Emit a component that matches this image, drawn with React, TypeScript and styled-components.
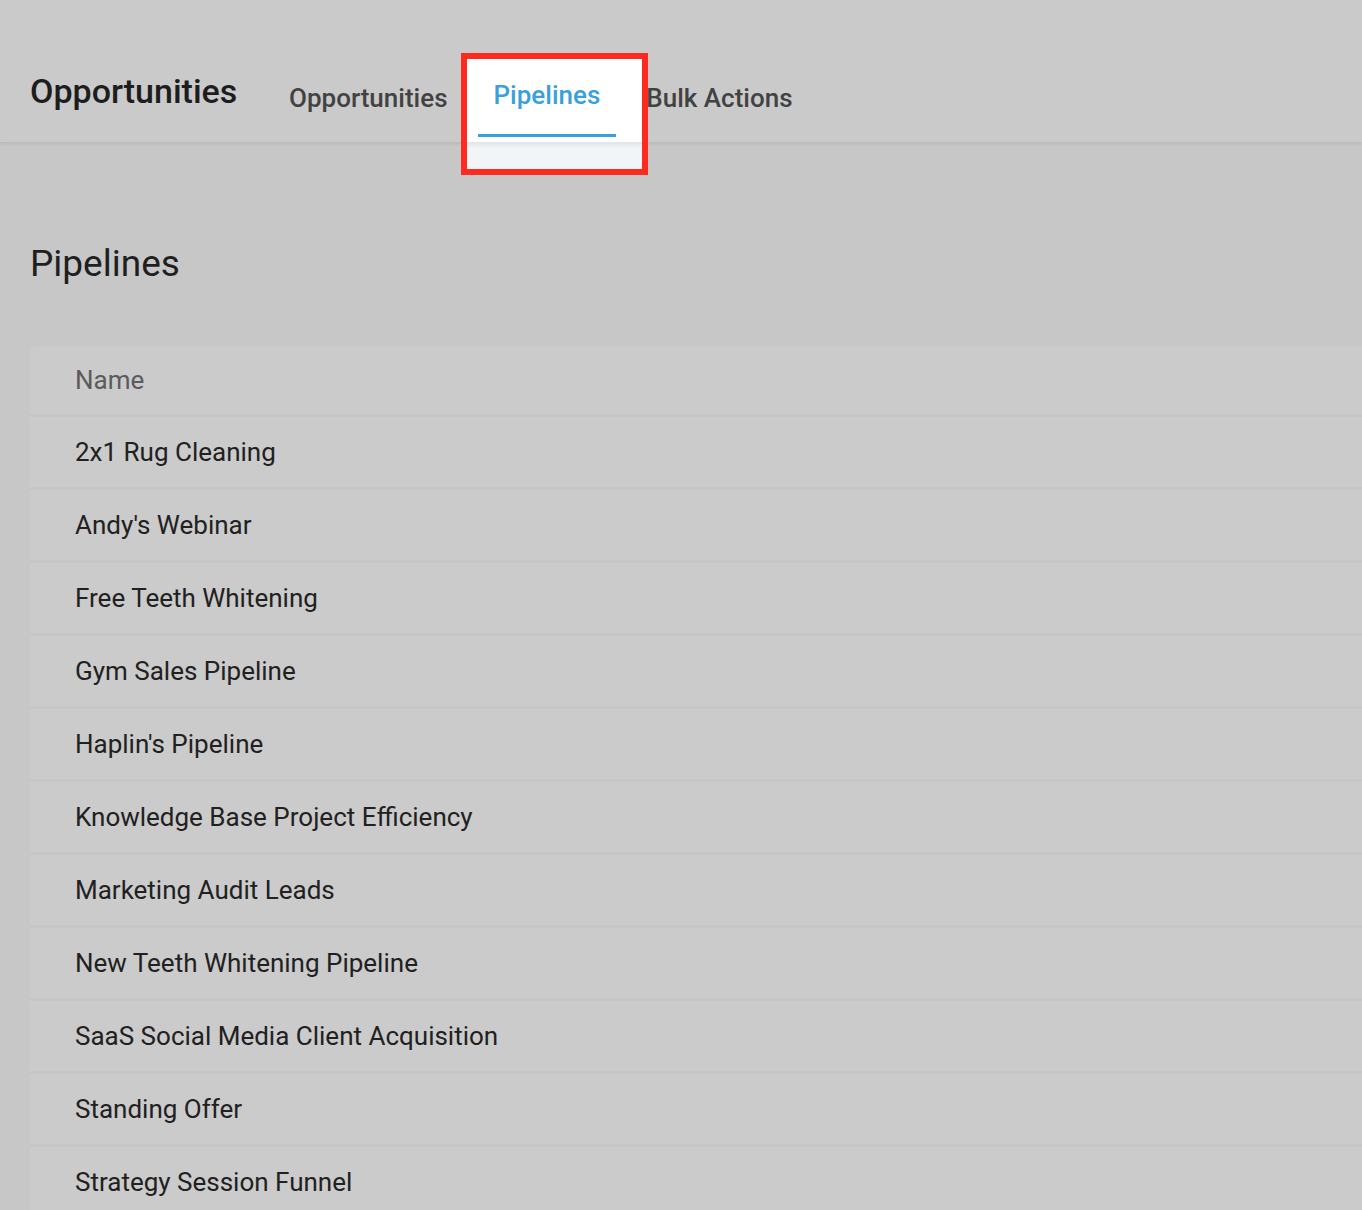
import styled, { createGlobalStyle } from "styled-components";

const pipelines = [
  "2x1 Rug Cleaning",
  "Andy's Webinar",
  "Free Teeth Whitening",
  "Gym Sales Pipeline",
  "Haplin's Pipeline",
  "Knowledge Base Project Efficiency",
  "Marketing Audit Leads",
  "New Teeth Whitening Pipeline",
  "SaaS Social Media Client Acquisition",
  "Standing Offer",
  "Strategy Session Funnel",
];

const tabs = ["Opportunities", "Pipelines", "Bulk Actions"];
const activeTab = "Pipelines";

export default function App() {
  return (
    <>
      <GlobalStyle />
      <Page>
        <Header>
          <Title>Opportunities</Title>
          <TabBar>
            {tabs.map((tab) => (
              <Tab key={tab} $active={tab === activeTab}>
                {tab}
              </Tab>
            ))}
          </TabBar>
        </Header>
        <Main>
          <Heading>Pipelines</Heading>
          <Card>
            <HeaderRow>Name</HeaderRow>
            {pipelines.map((name) => (
              <Row key={name}>{name}</Row>
            ))}
          </Card>
        </Main>
      </Page>
    </>
  );
}

const GlobalStyle = createGlobalStyle`
  html, body {
    margin: 0;
    padding: 0;
    background: #c7c7c7;
    overflow: hidden;
  }
  body {
    font-family: Roboto, "Liberation Sans", sans-serif;
  }
`;

const Page = styled.div`
  min-height: 1210px;
  background: #c7c7c7;
`;

const Header = styled.header`
  position: relative;
  z-index: 1;
  height: 142px;
  box-sizing: border-box;
  display: flex;
  align-items: flex-end;
  padding: 0 0 5px 30px;
  background: #cacaca;
  box-shadow: 0 2px 3px rgba(0, 0, 0, 0.07);
`;

const Title = styled.h1`
  margin: 0;
  width: 243px;
  padding-bottom: 22px;
  font-size: 34px;
  font-weight: 500;
  line-height: 48px;
  color: #1d1d1d;
  white-space: nowrap;
`;

const TabBar = styled.nav`
  display: flex;
  align-items: flex-end;
  gap: 14px;
`;

const Tab = styled.div<{ $active?: boolean }>`
  position: relative;
  isolation: isolate;
  padding: 0 16px ${(p) => (p.$active ? "24px" : "21px")};
  font-size: 26px;
  font-weight: 500;
  line-height: 36px;
  color: ${(p) => (p.$active ? "#3a9fdb" : "#424242")};
  white-space: nowrap;

  /* spotlight frame drawn over the dimmed page */
  &::before {
    content: "";
    display: ${(p) => (p.$active ? "block" : "none")};
    position: absolute;
    z-index: -1;
    left: -17px;
    right: -32px;
    top: -24px;
    height: 122px;
    box-sizing: border-box;
    border: 6px solid #ff2a1f;
    background: linear-gradient(
      to bottom,
      #ffffff 0,
      #ffffff 83px,
      #dfe3e6 83px,
      #eef2f5 88px,
      #f1f5f8 90px
    );
  }

  /* active underline */
  &::after {
    content: "";
    display: ${(p) => (p.$active ? "block" : "none")};
    position: absolute;
    left: 0;
    right: 0;
    bottom: 0;
    height: 3px;
    background: #3a9fdb;
  }
`;

const Main = styled.main`
  padding: 0 0 0 30px;
`;

const Heading = styled.h2`
  margin: 0;
  padding: 100px 0 61px 0;
  font-size: 37px;
  font-weight: 400;
  line-height: 44px;
  color: #1f1f1f;
`;

const Card = styled.div`
  border-radius: 4px 0 0 4px;
  display: flex;
  flex-direction: column;
  gap: 3px;
  background-color: #c6c6c6;
`;

const HeaderRow = styled.div`
  height: 67px;
  display: flex;
  align-items: center;
  padding: 0 0 2px 45px;
  box-sizing: border-box;
  background: #cbcbcb;
  border-radius: 4px 0 0 0;
  font-size: 26px;
  color: #5b5b5b;
`;

const Row = styled.div`
  height: 70px;
  display: flex;
  align-items: center;
  padding: 0 0 1px 45px;
  box-sizing: border-box;
  background: #cbcbcb;
  font-size: 26px;
  color: #212121;
`;
